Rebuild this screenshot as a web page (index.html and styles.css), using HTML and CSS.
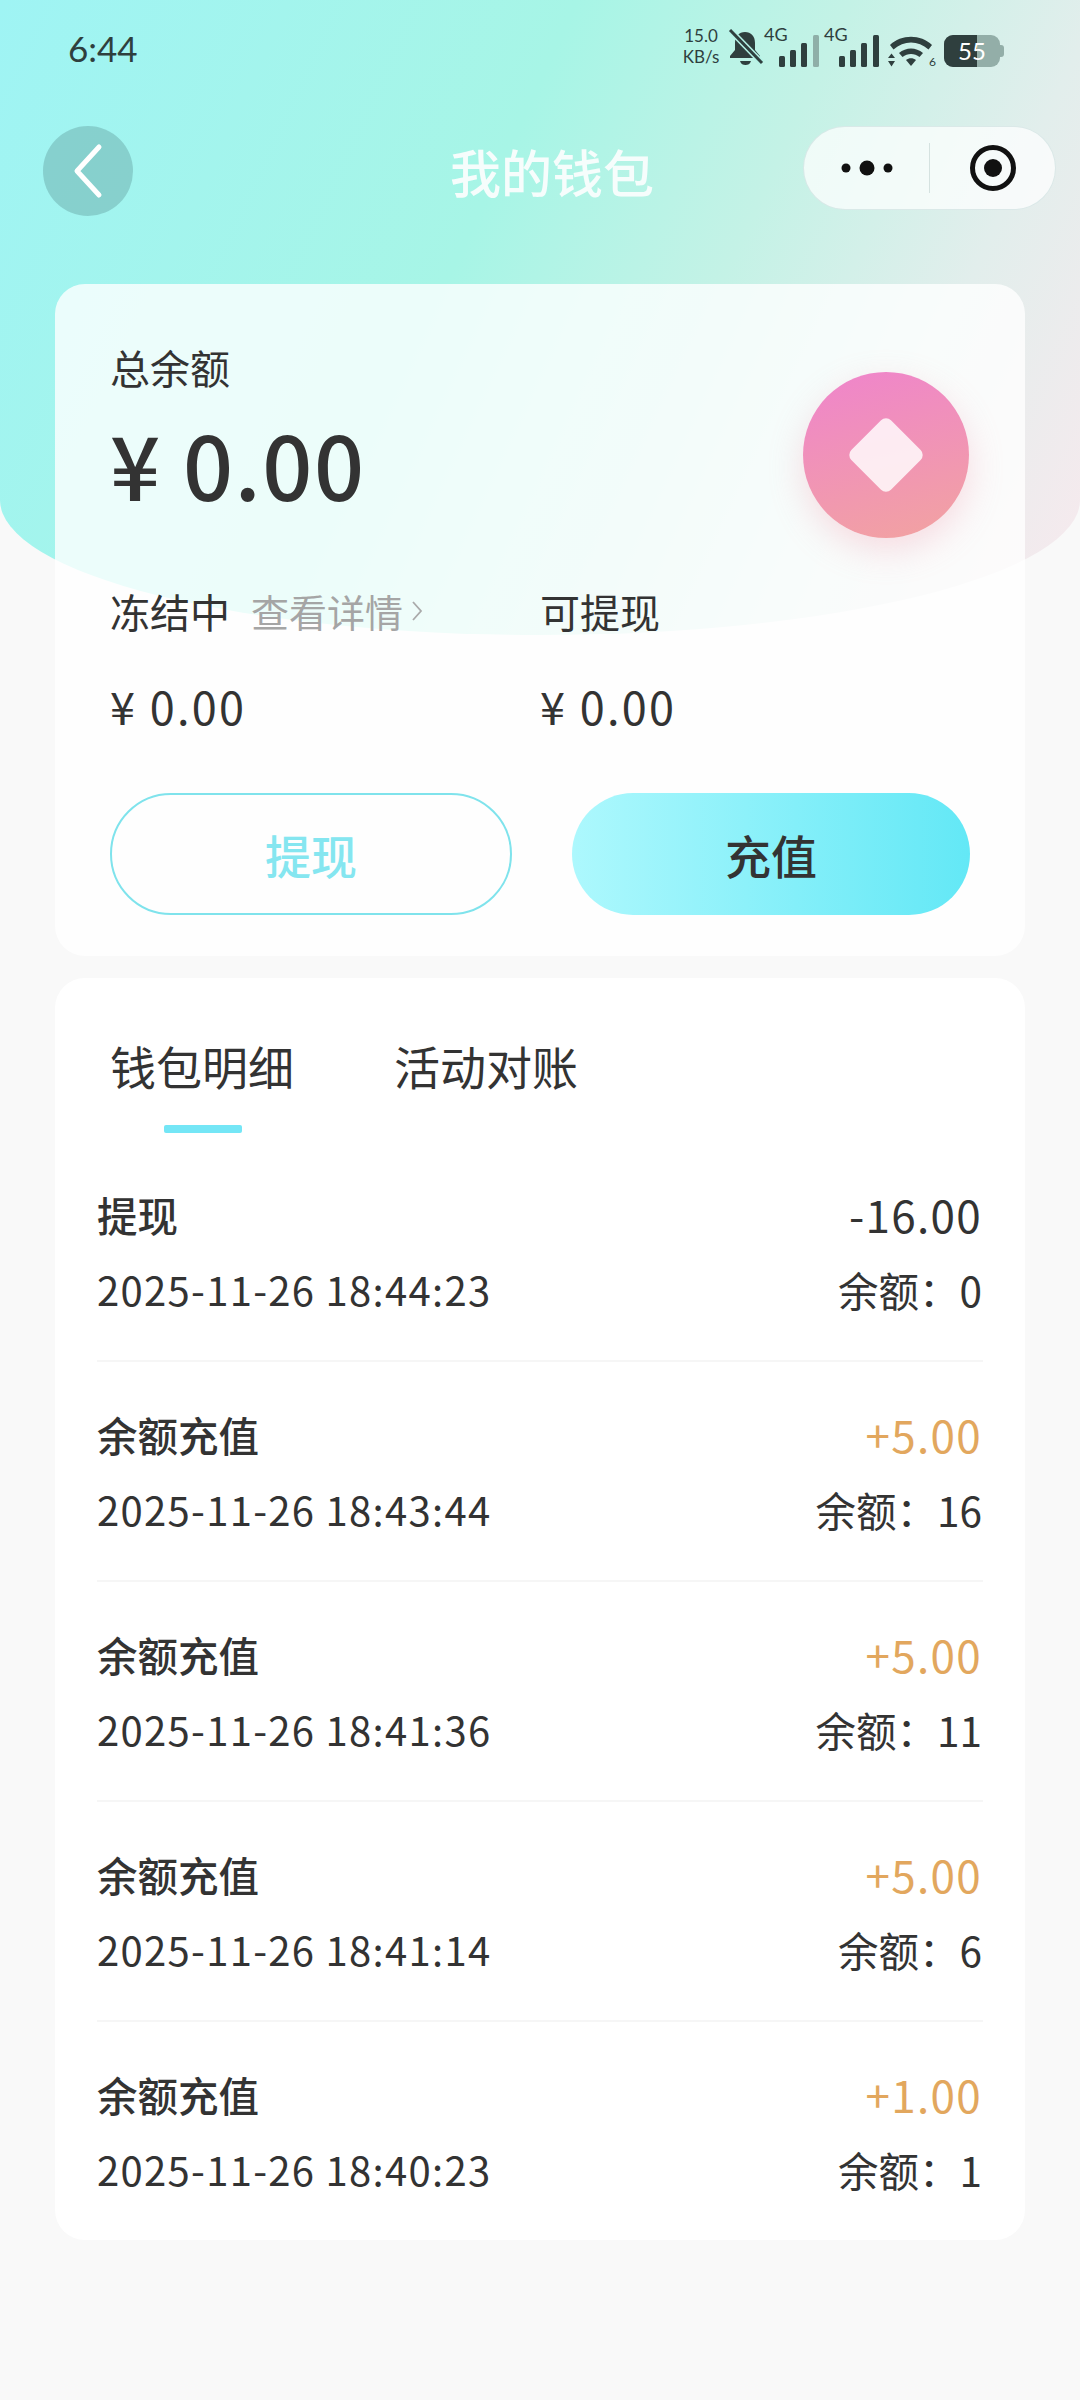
FILE: index.html
```html
<!DOCTYPE html>
<html lang="zh">
<head>
  <meta charset="UTF-8">
  <meta name="viewport" content="width=device-width, initial-scale=1">
  <title>我的钱包</title>
  <link rel="stylesheet" href="styles.css">
</head>
<body>
  <div class="header-bg"></div>
  <div class="page">
    <div class="status-bar">
      <span class="time">6:44</span>
      <div class="status-icons">
        <span class="speed">15.0<br>KB/s</span>
        <svg class="ic-bell" width="36" height="38" viewBox="0 0 36 38">
          <path d="M17 3c-6 0-10 4-10 11v7l-5 6v2h30v-2l-5-6v-7c0-7-4-11-10-11zM12 32h11c-1 3-3 4-5.500 4s-4.500-1-5.500-4z" fill="#2f3f3e"/>
          <path d="M2 1l32 33" stroke="#b4f2e6" stroke-width="6"/>
          <path d="M2 1l32 33" stroke="#2f3f3e" stroke-width="3"/>
        </svg>
        <div class="signal">
          <span class="net">4G</span>
          <svg width="40" height="32" viewBox="0 0 40 32">
            <rect x="0" y="21" width="6" height="11" rx="1.500" fill="#2f3f3e"/>
            <rect x="11" y="15" width="6" height="17" rx="1.500" fill="#2f3f3e"/>
            <rect x="22" y="8" width="6" height="24" rx="1.500" fill="#2f3f3e"/>
            <rect x="34" y="0" width="6" height="32" rx="1.500" fill="#8fafa8"/>
          </svg>
        </div>
        <div class="signal signal-second">
          <span class="net">4G</span>
          <svg width="40" height="32" viewBox="0 0 40 32">
            <rect x="0" y="21" width="6" height="11" rx="1.500" fill="#2f3f3e"/>
            <rect x="11" y="15" width="6" height="17" rx="1.500" fill="#2f3f3e"/>
            <rect x="22" y="8" width="6" height="24" rx="1.500" fill="#2f3f3e"/>
            <rect x="34" y="0" width="6" height="32" rx="1.500" fill="#2f3f3e"/>
          </svg>
        </div>
        <div class="wifi">
          <svg width="46" height="32" viewBox="0 0 46 32">
            <path d="M2 10C13-1 33-1 44 10l-3.500 4.500C30 5 16 5 5.500 14.500z" fill="#2f3f3e"/>
            <path d="M11 18c7-6 17-6 24 0l-3.500 4c-5-4-12-4-17 0z" fill="#2f3f3e"/>
            <path d="M18 25c3-2.300 7-2.300 10 0l-5 6z" fill="#2f3f3e"/>
            <path d="M0 23l3.500-4.500 3.500 4.500zM0 26l3.500 5.500 3.500-5.500z" fill="#2f3f3e"/>
          </svg>
          <span class="wifi-num">6</span>
        </div>
        <div class="battery">
          <div class="battery-fill"></div>
          <span class="battery-num">55</span>
          <div class="battery-cap"></div>
        </div>
      </div>
    </div>

    <div class="nav-bar">
      <div class="back-btn">
        <svg width="40" height="60" viewBox="0 0 40 60">
          <path d="M31 6L9 30l22 24" fill="none" stroke="#fff" stroke-width="5" stroke-linecap="round" stroke-linejoin="round"/>
        </svg>
      </div>
      <div class="nav-title">我的钱包</div>
      <div class="capsule">
        <div class="capsule-part">
          <svg width="52" height="20" viewBox="0 0 52 20">
            <circle cx="5" cy="10" r="4.500" fill="#111"/>
            <circle cx="26" cy="10" r="7.500" fill="#111"/>
            <circle cx="47" cy="10" r="4.500" fill="#111"/>
          </svg>
        </div>
        <div class="capsule-line"></div>
        <div class="capsule-part">
          <svg width="48" height="48" viewBox="0 0 48 48">
            <circle cx="24" cy="24" r="20.500" fill="none" stroke="#111" stroke-width="5"/>
            <circle cx="24" cy="24" r="9" fill="#111"/>
          </svg>
        </div>
      </div>
    </div>

    <section class="card balance-card">
      <div class="balance-top">
        <div>
          <div class="label">总余额</div>
          <div class="total">¥ 0.00</div>
        </div>
        <div class="coin"><div class="coin-diamond"></div></div>
      </div>
      <div class="balance-cols">
        <div class="col">
          <div class="label-row">
            <span class="label">冻结中</span>
            <span class="detail-link">查看详情</span>
            <svg class="chevron" width="12" height="24" viewBox="0 0 12 24">
              <path d="M2 3l8 9-8 9" fill="none" stroke="#aaa" stroke-width="1.800"/>
            </svg>
          </div>
          <div class="sub-amount">¥ 0.00</div>
        </div>
        <div class="col">
          <div class="label-row"><span class="label">可提现</span></div>
          <div class="sub-amount">¥ 0.00</div>
        </div>
      </div>
      <div class="btn-row">
        <div class="btn btn-outline">提现</div>
        <div class="btn btn-fill">充值</div>
      </div>
    </section>

    <section class="card list-card">
      <div class="tabs">
        <div class="tab tab-active">钱包明细</div>
        <div class="tab">活动对账</div>
      </div>
      <div class="record">
        <div class="record-line">
          <span class="record-title">提现</span>
          <span class="record-amount">-16.00</span>
        </div>
        <div class="record-line record-sub">
          <span class="record-date">2025-11-26 18:44:23</span>
          <span>余额：0</span>
        </div>
      </div>
      <div class="record">
        <div class="record-line">
          <span class="record-title">余额充值</span>
          <span class="record-amount plus">+5.00</span>
        </div>
        <div class="record-line record-sub">
          <span class="record-date">2025-11-26 18:43:44</span>
          <span>余额：16</span>
        </div>
      </div>
      <div class="record">
        <div class="record-line">
          <span class="record-title">余额充值</span>
          <span class="record-amount plus">+5.00</span>
        </div>
        <div class="record-line record-sub">
          <span class="record-date">2025-11-26 18:41:36</span>
          <span>余额：11</span>
        </div>
      </div>
      <div class="record">
        <div class="record-line">
          <span class="record-title">余额充值</span>
          <span class="record-amount plus">+5.00</span>
        </div>
        <div class="record-line record-sub">
          <span class="record-date">2025-11-26 18:41:14</span>
          <span>余额：6</span>
        </div>
      </div>
      <div class="record">
        <div class="record-line">
          <span class="record-title">余额充值</span>
          <span class="record-amount plus">+1.00</span>
        </div>
        <div class="record-line record-sub">
          <span class="record-date">2025-11-26 18:40:23</span>
          <span>余额：1</span>
        </div>
      </div>
    </section>
  </div>
</body>
</html>
```

FILE: styles.css
```css
* {
  box-sizing: border-box;
}
html, body {
  margin: 0;
  height: 2400px;
  overflow: hidden;
}
body {
  position: relative;
  background-color: #f9f9f9;
  font-family: "Noto Sans CJK SC", "Noto Sans", sans-serif;
  color: #333;
}
.header-bg {
  position: absolute;
  left: 0;
  top: 0;
  width: 1080px;
  height: 635px;
  border-radius: 0 0 540px 540px / 0 0 135px 135px;
  background: linear-gradient(115deg, #9ff4f4 0%, #a7f5e6 42%, #c4f2e6 62%, #e2eeec 80%, #f9e9ee 100%);
}
.page {
  position: relative;
}

/* status bar */
.status-bar {
  height: 96px;
  padding: 27px 80px 0 68px;
  display: flex;
  justify-content: space-between;
  align-items: flex-start;
  color: #2f3f3e;
}
.time {
  font-family: "Lato", sans-serif;
  font-size: 35px;
  line-height: 42px;
}
.status-icons {
  display: flex;
  align-items: flex-end;
  height: 40px;
}
.speed {
  font-family: "Lato", sans-serif;
  font-size: 17px;
  line-height: 21px;
  text-align: center;
  width: 38px;
}
.ic-bell {
  margin-left: 8px;
}
.signal {
  position: relative;
  width: 40px;
  height: 40px;
  margin-left: 15px;
  display: flex;
  align-items: flex-end;
}
.signal-second {
  margin-left: 20px;
}
.net {
  position: absolute;
  left: -15px;
  top: -4px;
  font-family: "Lato", sans-serif;
  font-size: 18px;
  line-height: 22px;
}
.wifi {
  position: relative;
  width: 46px;
  height: 32px;
  margin-left: 9px;
}
.wifi-num {
  position: absolute;
  right: -2px;
  bottom: -1px;
  font-family: "Lato", sans-serif;
  font-size: 12px;
  line-height: 12px;
}
.battery {
  position: relative;
  width: 56px;
  height: 32px;
  margin-left: 10px;
  border-radius: 9px;
  background: #93aea8;
}
.battery-fill {
  width: 33px;
  height: 32px;
  border-radius: 9px 0 0 9px;
  background: #2f3f3e;
}
.battery-num {
  position: absolute;
  left: 14px;
  top: 3px;
  font-family: "Lato", sans-serif;
  font-size: 24px;
  line-height: 26px;
  color: #fff;
}
.battery-cap {
  position: absolute;
  right: -4px;
  top: 10px;
  width: 4px;
  height: 12px;
  border-radius: 0 3px 3px 0;
  background: #93aea8;
}

/* nav */
.nav-bar {
  height: 92px;
  margin-top: 29px;
  padding: 0 24px 0 43px;
  display: flex;
  justify-content: space-between;
  align-items: center;
}
.back-btn {
  width: 90px;
  height: 90px;
  border-radius: 50%;
  background: rgba(100, 160, 160, 0.43);
  display: flex;
  align-items: center;
  justify-content: center;
}
.nav-title {
  flex: 1;
  padding-left: 168px;
  text-align: center;
  font-size: 51px;
  font-weight: 500;
  line-height: 60px;
  color: #f6fdfc;
}
.capsule {
  width: 253px;
  height: 84px;
  margin-bottom: 6px;
  border-radius: 42px;
  background: rgba(255, 255, 255, 0.72);
  border: 1px solid rgba(200, 220, 220, 0.6);
  display: flex;
  align-items: center;
}
.capsule-part {
  flex: 1;
  display: flex;
  align-items: center;
  justify-content: center;
}
.capsule-line {
  width: 1px;
  height: 50px;
  background: rgba(120, 150, 150, 0.25);
}

/* cards */
.card {
  width: 970px;
  margin-left: 55px;
  border-radius: 30px;
}
.balance-card {
  height: 672px;
  margin-top: 67px;
  padding: 55px 55px 0 55px;
  background: rgba(255, 255, 255, 0.79);
}
.balance-top {
  display: flex;
  justify-content: space-between;
  height: 229px;
}
.label {
  font-size: 40px;
  line-height: 56px;
  color: #333;
}
.total {
  margin-top: 13px;
  font-size: 88px;
  font-weight: 500;
  letter-spacing: 1.5px;
  line-height: 110px;
  color: #333;
}
.coin {
  width: 166px;
  height: 166px;
  margin-top: 33px;
  margin-right: 1px;
  border-radius: 50%;
  background: linear-gradient(165deg, #ef84cc 0%, #f2a3a0 100%);
  box-shadow: 0 12px 34px rgba(240, 150, 170, 0.3);
  display: flex;
  align-items: center;
  justify-content: center;
}
.coin-diamond {
  width: 56px;
  height: 56px;
  border-radius: 7px;
  background: rgba(255, 255, 255, 0.82);
  transform: rotate(45deg);
}
.balance-cols {
  display: flex;
  margin-top: 15px;
}
.col {
  width: 431px;
}
.label-row {
  display: flex;
  align-items: center;
  gap: 21px;
  height: 56px;
}
.detail-link {
  font-size: 38px;
  line-height: 56px;
  color: #a5a5a5;
}
.chevron {
  margin-left: -13px;
}
.sub-amount {
  margin-top: 38px;
  font-size: 45px;
  letter-spacing: 2.3px;
  line-height: 58px;
  color: #333;
}
.btn-row {
  display: flex;
  justify-content: space-between;
  margin-top: 58px;
}
.btn {
  width: 398px;
  height: 122px;
  border-radius: 61px;
  display: flex;
  align-items: center;
  justify-content: center;
  font-size: 46px;
}
.btn-outline {
  width: 402px;
  border: 2px solid #7fe3ec;
  color: #85e6f0;
  font-weight: 500;
}
.btn-fill {
  background: linear-gradient(90deg, #adf8fd 0%, #63e8f6 100%);
  color: #333;
  font-weight: 500;
}

/* list */
.list-card {
  height: 1262px;
  margin-top: 22px;
  padding: 0 42px;
  background: #fff;
}
.tabs {
  display: flex;
  gap: 100px;
  padding: 55px 0 0 13px;
  height: 164px;
}
.tab {
  position: relative;
  height: 64px;
  font-size: 46px;
  line-height: 64px;
  width: 184px;
  color: #333;
}
.tab-active::after {
  content: "";
  position: absolute;
  left: 54px;
  top: 92px;
  width: 78px;
  height: 8px;
  border-radius: 2px;
  background: #74e6f6;
}
.record {
  height: 220px;
  padding-top: 43px;
  border-bottom: 2px solid #f6f6f6;
}
.record:last-child {
  border-bottom: none;
}
.record-line {
  display: flex;
  justify-content: space-between;
  align-items: center;
  height: 58px;
  padding-right: 1px;
}
.record-sub {
  margin-top: 17px;
  font-size: 40.5px;
  color: #333;
}
.record-date {
  font-size: 40px;
  letter-spacing: 1.3px;
}
.record-title {
  font-size: 40.5px;
  font-weight: 500;
  color: #333;
}
.record-amount {
  font-size: 44px;
  letter-spacing: 1.3px;
  color: #333;
}
.plus {
  color: #e2a75e;
}
```
